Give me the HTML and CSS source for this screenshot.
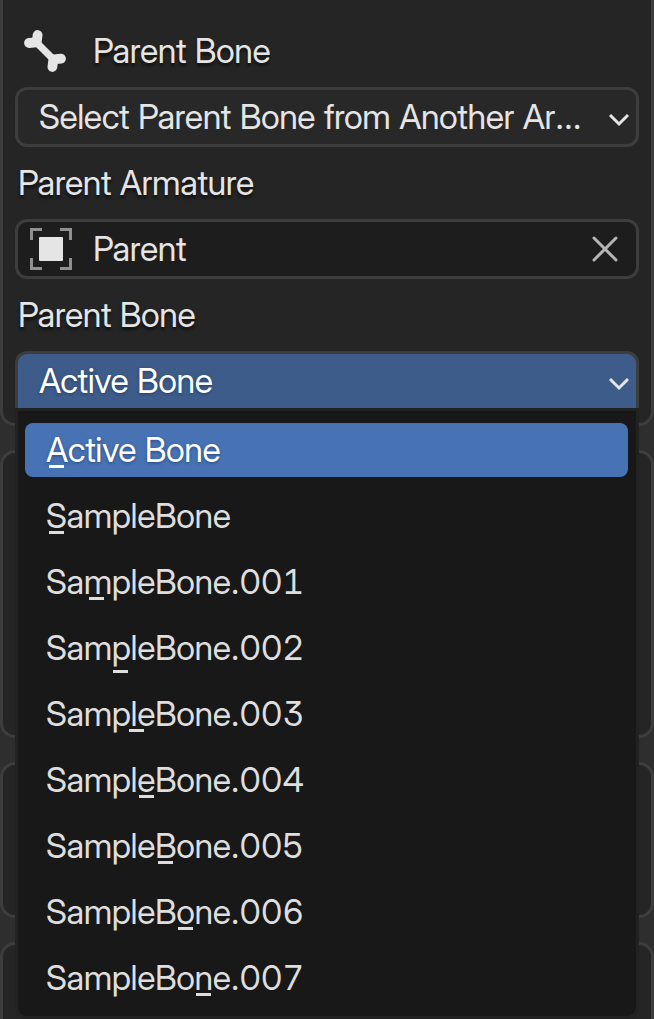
FILE: index.html
```html
<!DOCTYPE html>
<html lang="en">
<head>
<meta charset="utf-8">
<title>Parent Bone</title>
<link rel="stylesheet" href="styles.css">
</head>
<body>
<main class="sidebar">
  <section class="panel panel-main">
    <header class="heading">
      <svg class="bone" viewBox="0 0 42 42" width="42" height="42"><path d="M11 11 L31 31" stroke-width="7"/><path d="M13.6 5 L12.8 11.5 M5 13 L12 12.4 M28.4 37 L29.2 30.5 M37 28.6 L30 29.4" stroke-width="9.8" stroke-linecap="round"/></svg>
      <span class="text">Parent Bone</span>
    </header>
    <div class="field select">
      <span class="text">Select Parent Bone from Another Ar...</span>
      <svg class="chevron" viewBox="0 0 20 14" width="20" height="14"><path d="M1 2 L10 11 L19 2"/></svg>
    </div>
    <div class="label"><span class="text">Parent Armature</span></div>
    <div class="field object">
      <svg class="object-icon" viewBox="0 0 42 42" width="42" height="42"><path d="M1.5 12V1.5H12 M30 1.5H40.5V12 M40.5 30V40.5H30 M12 40.5H1.5V30"/><rect x="9" y="9" width="24" height="24" rx="1"/></svg>
      <span class="text">Parent</span>
      <svg class="clear" viewBox="0 0 26 26" width="26" height="26"><path d="M2 2L24 24M24 2L2 24"/></svg>
    </div>
    <div class="label"><span class="text">Parent Bone</span></div>
    <div class="field select open">
      <span class="text">Active Bone</span>
      <svg class="chevron" viewBox="0 0 20 14" width="20" height="14"><path d="M1 2 L10 11 L19 2"/></svg>
      <ul class="menu">
        <li class="item active"><span class="text"><span class="key k-cap">A</span>ctive Bone</span></li>
        <li class="item"><span class="text"><span class="key k-cap">S</span>ampleBone</span></li>
        <li class="item"><span class="text">Sa<span class="key k-m">m</span>pleBone.001</span></li>
        <li class="item"><span class="text">Sam<span class="key k-p">p</span>leBone.002</span></li>
        <li class="item"><span class="text">Samp<span class="key k-l">l</span>eBone.003</span></li>
        <li class="item"><span class="text">Sampl<span class="key">e</span>Bone.004</span></li>
        <li class="item"><span class="text">Sample<span class="key k-cap">B</span>one.005</span></li>
        <li class="item"><span class="text">SampleB<span class="key">o</span>ne.006</span></li>
        <li class="item"><span class="text">SampleBo<span class="key">n</span>e.007</span></li>
      </ul>
    </div>
  </section>
  <section class="panel panel-a"></section>
  <section class="panel panel-b"></section>
  <section class="panel panel-c"></section>
</main>
</body>
</html>
```
FILE: styles.css
```css
* { box-sizing: border-box; }

body {
  margin: 0;
  height: 1019px;
  overflow: hidden;
  background: #2e2e2e;
  color: #e5e5e5;
  font: 400 34px/40px "Inter Display", Inter, "Liberation Sans", sans-serif;
  font-variation-settings: "opsz" 32;
  font-feature-settings: "tnum", "cv09";
}

.sidebar {
  display: flex;
  flex-direction: column;
  gap: 24px;
}

.panel {
  flex: none;
  border: 3px solid #3d3d3d;
  border-radius: 15px;
  background: #252525;
}

.panel-main {
  height: 426px;
  padding: 18px 12px 0;
  border-top: 0;
  border-radius: 0 0 15px 15px;
}
.panel-a { height: 288px; }
.panel-b { height: 156px; }
.panel-c { height: 120px; }

.text { white-space: pre; letter-spacing: -0.42px; }

.heading {
  display: flex;
  align-items: center;
  gap: 27px;
  height: 66px;
  padding-left: 9px;
  text-shadow: 0 3px 3px #111;
}

.bone { fill: none; stroke: #e5e5e5; }

.field {
  display: flex;
  align-items: center;
  height: 60px;
  margin-top: 3px;
  border: 3px solid #3d3d3d;
  border-radius: 12px;
}

.select {
  position: relative;
  justify-content: space-between;
  padding: 0 7px 0 21px;
  background: #282828;
}

.chevron { flex: none; fill: none; stroke: #e5e5e5; stroke-width: 3; margin-top: 6px; }

.label {
  display: flex;
  align-items: center;
  height: 69px;
  padding: 3px 0 0 3px;
  text-shadow: 0 3px 3px #111;
}

.object {
  padding: 0 18px 0 12px;
  background: #1d1d1d;
}
.object .text { margin-left: 21px; }
.object-icon { fill: #e5e5e5; }
.object-icon path { fill: none; stroke: #909090; stroke-width: 3; }
.clear { margin-left: auto; fill: none; stroke: #b5b5b5; stroke-width: 3; stroke-linecap: round; }

.open {
  background: #3d5c8a;
  border-bottom-color: #222;
  border-radius: 12px 12px 0 0;
  color: #fff;
  text-shadow: 0 1px 3px #243d66;
}

.menu {
  position: absolute;
  top: 54px;
  left: -3px;
  width: 624px;
  height: 611px;
  margin: 0;
  padding: 12px 8px 0 7px;
  list-style: none;
  background: #181818;
  border: 3px solid #222;
  border-radius: 0 0 12px 12px;
  color: #dedede;
  text-shadow: none;
}

.item {
  display: flex;
  align-items: center;
  height: 54px;
  margin-bottom: 12px;
  padding-left: 21px;
  border-radius: 8px;
}
.item.active {
  background: #4772b3;
  color: #fff;
  text-shadow: 0 1px 3px #294a7c;
}

.key { position: relative; }
.key::after {
  content: "";
  position: absolute;
  left: 2px;
  top: 36px;
  width: 15px;
  height: 3px;
  background: currentColor;
}
.k-cap::after { left: 3px; }
.k-m::after { left: 5px; }
.k-p::after { left: 1px; top: 43px; }
.k-l::after { left: -2px; }
```
